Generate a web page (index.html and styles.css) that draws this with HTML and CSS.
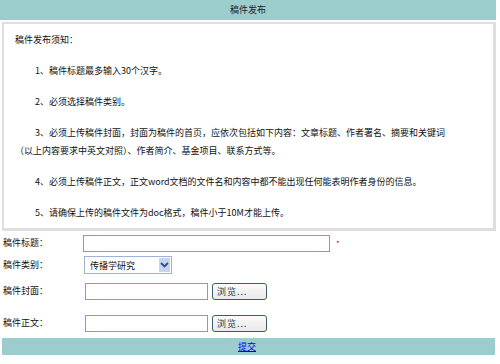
FILE: index.html
```html
<!DOCTYPE html>
<html lang="zh">
<head>
<meta charset="utf-8">
<title>稿件发布</title>
<link rel="stylesheet" href="styles.css">
</head>
<body>
<div class="page">
  <div class="bar head">稿件发布</div>
  <div class="notice">
    <p class="title">稿件发布须知：</p>
    <p class="item">1、稿件标题最多输入30个汉字。</p>
    <p class="item">2、必须选择稿件类别。</p>
    <p class="item">3、必须上传稿件封面，封面为稿件的首页，应依次包括如下内容：文章标题、作者署名、摘要和关键词<br>（以上内容要求中英文对照）、作者简介、基金项目、联系方式等。</p>
    <p class="item">4、必须上传稿件正文，正文word文档的文件名和内容中都不能出现任何能表明作者身份的信息。</p>
    <p class="item">5、请确保上传的稿件文件为doc格式，稿件小于10M才能上传。</p>
  </div>
  <div class="form">
    <div class="row r1">
      <span class="label">稿件标题：</span>
      <div class="field"><input class="text wide" type="text"><span class="req">*</span></div>
    </div>
    <div class="row r2">
      <span class="label">稿件类别：</span>
      <div class="field">
        <div class="select"><span class="sel-text">传播学研究</span><span class="sel-btn"><svg width="9" height="6" viewBox="0 0 9 6"><path d="M1 1 L4.5 4.5 L8 1" fill="none" stroke="#2b4f8a" stroke-width="1.8"/></svg></span></div>
      </div>
    </div>
    <div class="row r3">
      <span class="label">稿件封面：</span>
      <div class="field"><input class="text short" type="text"><button class="browse" type="button">浏览...</button></div>
    </div>
    <div class="row r4">
      <span class="label">稿件正文：</span>
      <div class="field"><input class="text short" type="text"><button class="browse" type="button">浏览...</button></div>
    </div>
  </div>
  <div class="bar foot"><a href="#" class="submit">提交</a></div>
</div>
</body>
</html>
```
FILE: styles.css
```css
html, body {
  margin: 0;
  padding: 0;
  background: #fff;
}
body {
  font-family: "Noto Sans CJK SC", "Liberation Sans", sans-serif;
  font-size: 9px;
  color: #111;
}
.page {
  width: 496px;
}
.bar {
  background: #9ccdcd;
  text-align: center;
}
.head {
  height: 20px;
  line-height: 20px;
  font-size: 9px;
  color: #222;
}
.notice {
  box-sizing: border-box;
  margin: 2px 0 0 2px;
  height: 209px;
  border: 3px solid #dedede;
  border-top-width: 2px;
  border-left-width: 2px;
  padding: 7px 10px 0 11px;
}
.notice p {
  margin: 0;
  line-height: 18px;
}
.notice .title {
  margin-bottom: 13px;
}
.notice .item {
  text-indent: 20px;
  margin-bottom: 13px;
}
.form {
  display: flex;
  flex-direction: column;
}
.row {
  display: grid;
  grid-template-columns: 83px 1fr;
  align-items: center;
  padding-left: 3px;
}
.r1 { height: 18px; margin-top: 3px; }
.r2 { height: 18px; margin-top: 4px; }
.r3 { height: 18px; margin-top: 8px; }
.r4 { height: 18px; margin-top: 14px; }
.label {
  line-height: 18px;
}
.field {
  display: flex;
  align-items: center;
}
.text {
  box-sizing: border-box;
  height: 17px;
  border: 1px solid #7f9dcc;
  background: #fff;
  margin: 0;
  padding: 0;
}
.wide {
  width: 247px;
  margin-left: -3px;
}
.short {
  width: 123px;
  margin-left: -1px;
}
.req {
  color: #e8001c;
  margin-left: 6px;
  font-size: 8px;
}
.select {
  box-sizing: border-box;
  width: 88px;
  height: 18px;
  margin-left: -2px;
  border: 1px solid #9db4d6;
  display: flex;
  align-items: center;
  justify-content: space-between;
  background: #fff;
}
.sel-text {
  padding-left: 5px;
  color: #111;
}
.sel-btn {
  width: 11px;
  height: 14px;
  margin-right: 1px;
  background: #c8d3f1;
  display: flex;
  align-items: center;
  justify-content: center;
}
.browse {
  box-sizing: border-box;
  width: 55px;
  height: 17px;
  margin: 0 0 0 4px;
  padding: 0 0 0 4px;
  text-align: left;
  font-family: inherit;
  font-size: 9px;
  color: #333;
  border: 1px solid #3d5a7a;
  border-radius: 3px;
  background: linear-gradient(#fbfbfb, #e9e9e9);
  letter-spacing: 1px;
}
.foot {
  margin: 6px 0 0 2px;
  height: 17px;
  line-height: 17px;
  width: 493px;
}
.submit {
  color: #0000ee;
  text-decoration: underline;
  font-size: 9px;
  margin-left: -3px;
}
```
